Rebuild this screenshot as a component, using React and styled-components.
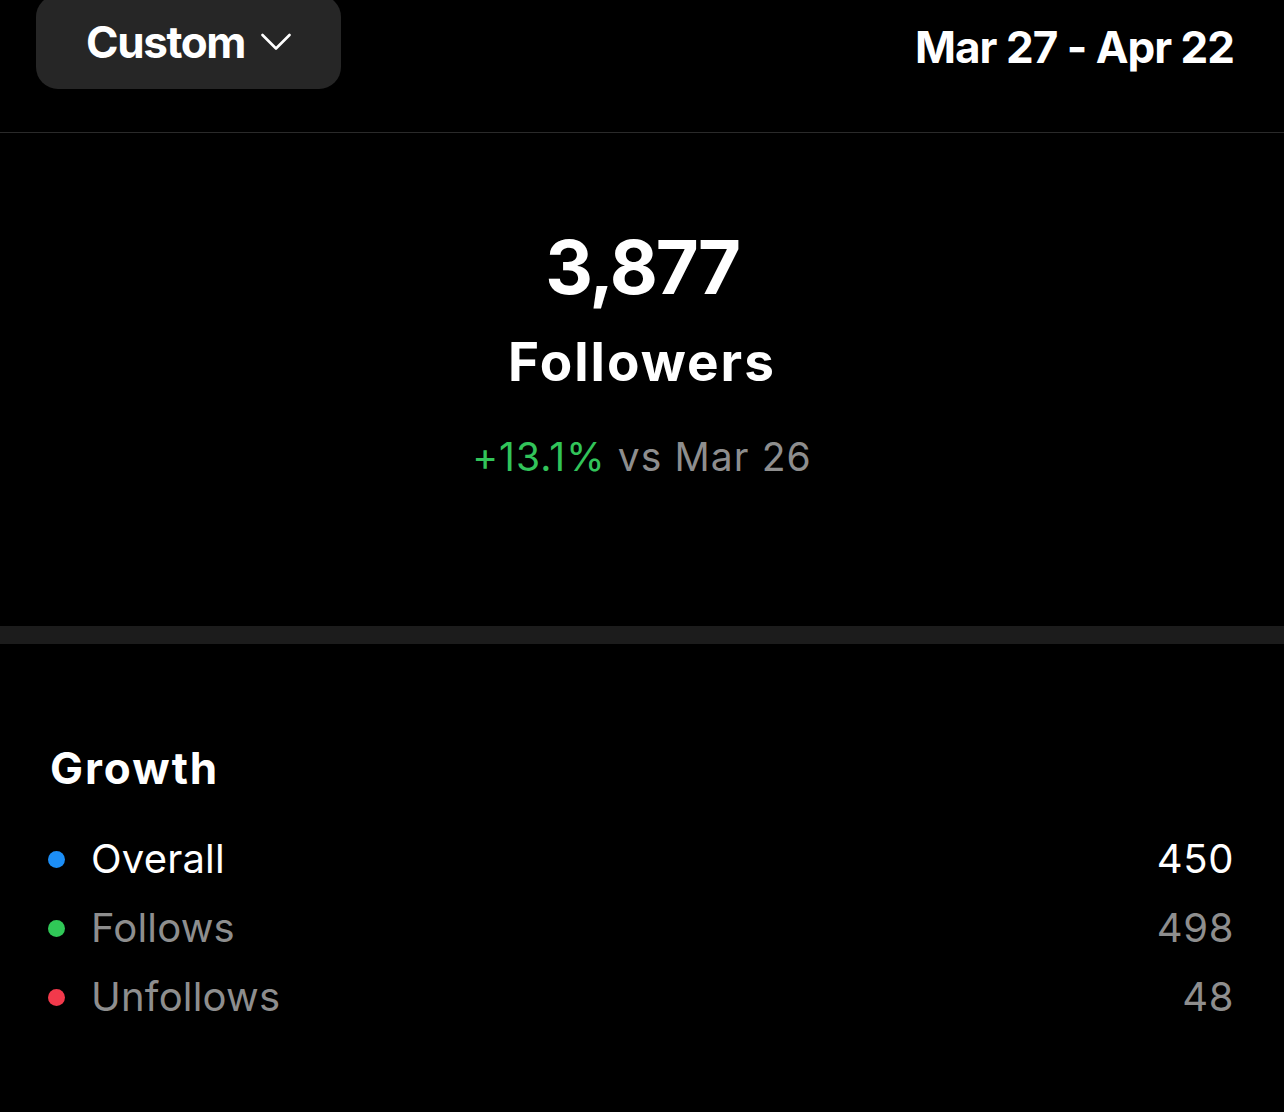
import styled, { createGlobalStyle } from "styled-components";

const GlobalStyle = createGlobalStyle`
  html, body {
    margin: 0;
    padding: 0;
    background: #000;
  }
  body {
    font-family: Inter, "Liberation Sans", Arial, sans-serif;
    color: #fff;
    overflow: hidden;
  }
`;

const Page = styled.div`
  width: 1284px;
  height: 1112px;
  background: #000;
  overflow: hidden;
`;

const Header = styled.div`
  box-sizing: border-box;
  display: flex;
  justify-content: space-between;
  align-items: flex-start;
  height: 138px;
  margin-top: -5px;
  padding: 0 50px 0 36px;
  border-bottom: 1px solid #2a2a2a;
`;

const RangeButton = styled.div`
  display: flex;
  align-items: center;
  gap: 16px;
  height: 94px;
  padding: 0 50px;
  background: #262626;
  border-radius: 22px;
  font-size: 44px;
  font-weight: 700;
  letter-spacing: -1.4px;
  line-height: 1;
  cursor: pointer;
`;

const DateRange = styled.div`
  padding-top: 30px;
  font-size: 44px;
  font-weight: 700;
  letter-spacing: -1px;
  line-height: 1;
`;

const Hero = styled.div`
  display: flex;
  flex-direction: column;
  align-items: center;
  height: 493px;
  padding-top: 97px;
  box-sizing: border-box;
`;

const BigNumber = styled.div`
  font-size: 74px;
  font-weight: 700;
  letter-spacing: -2.2px;
  line-height: 1;
`;

const BigLabel = styled.div`
  margin-top: 32px;
  font-size: 53px;
  font-weight: 700;
  letter-spacing: 2px;
  line-height: 1;
`;

const Change = styled.div`
  margin-top: 48px;
  font-size: 39px;
  letter-spacing: 1.1px;
  line-height: 1;
  color: #8e8e8e;
`;

const Up = styled.span`
  color: #32c45a;
`;

const Band = styled.div`
  height: 18px;
  background: #1c1c1c;
`;

const Growth = styled.div`
  padding: 102px 50px 0 48px;
`;

const SectionTitle = styled.div`
  margin-left: 2px;
  font-size: 44px;
  font-weight: 700;
  letter-spacing: 2px;
  line-height: 1;
`;

const List = styled.div`
  display: flex;
  flex-direction: column;
  gap: 29px;
  margin-top: 49px;
`;

const Row = styled.div`
  display: flex;
  align-items: center;
  font-size: 40px;
  letter-spacing: 0.2px;
  line-height: 1;
  color: ${(p) => (p.$active ? "#fff" : "#8e8e8e")};
`;

const Dot = styled.span`
  width: 17px;
  height: 17px;
  border-radius: 50%;
  background: ${(p) => p.$color};
  margin-right: 26px;
  flex-shrink: 0;
`;

const Name = styled.span`
  flex: 1;
`;

const Value = styled.span`
  letter-spacing: 0.6px;
`;

const rows = [
  { name: "Overall", value: "450", color: "#1c8ef6", active: true },
  { name: "Follows", value: "498", color: "#30c857" },
  { name: "Unfollows", value: "48", color: "#f2394b" },
];

const App = () => {
  return (
    <Page>
      <GlobalStyle />
      <Header>
        <RangeButton>
          Custom
          <svg width="30" height="18" viewBox="0 0 30 18" fill="none">
            <path d="M1.5 2 L15 15.5 L28.5 2" stroke="#fff" strokeWidth="2.6" strokeLinecap="round" strokeLinejoin="round" />
          </svg>
        </RangeButton>
        <DateRange>Mar 27 - Apr 22</DateRange>
      </Header>
      <Hero>
        <BigNumber>3,877</BigNumber>
        <BigLabel>Followers</BigLabel>
        <Change>
          <Up>+13.1%</Up> vs Mar 26
        </Change>
      </Hero>
      <Band />
      <Growth>
        <SectionTitle>Growth</SectionTitle>
        <List>
          {rows.map((r) => (
            <Row key={r.name} $active={r.active}>
              <Dot $color={r.color} />
              <Name>{r.name}</Name>
              <Value>{r.value}</Value>
            </Row>
          ))}
        </List>
      </Growth>
    </Page>
  );
};

export default App;
